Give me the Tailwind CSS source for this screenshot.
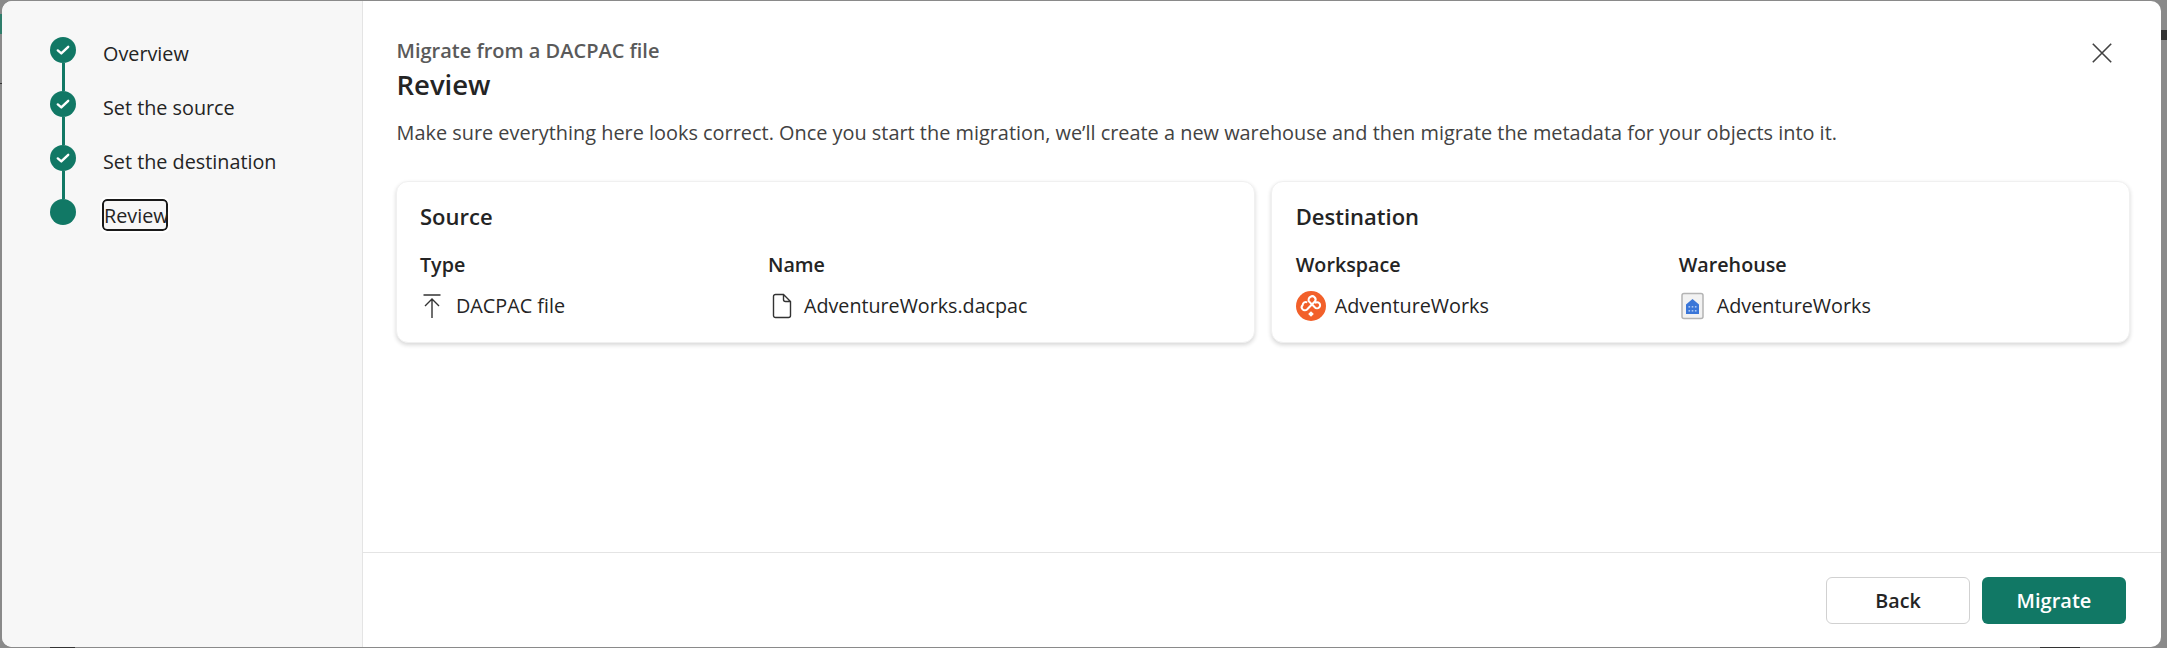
<!doctype html>
<html><head><meta charset="utf-8"><script src="https://cdn.jsdelivr.net/npm/@tailwindcss/browser@4"></script></head>
<body class="m-0 overflow-hidden">
<div class="relative w-[2167px] h-[648px] bg-[#8a8a8a] pt-px pl-[2px] pr-[6px] pb-px font-['Open_Sans','Noto_Sans',sans-serif] text-[#242424]">
  <div class="absolute left-0 top-[14px] w-[2px] h-[20px] bg-[#2f7d6b]"></div>
  <div class="absolute left-0 top-[83px] w-[2px] h-px bg-[#333]"></div>
  <div class="absolute left-[50px] top-[647px] w-[25px] h-px bg-[#333]"></div>
  <div class="absolute left-[2040px] top-[647px] w-[40px] h-px bg-[#333]"></div>
  <div class="absolute left-[2161px] top-[30px] w-[6px] h-[10px] bg-[#333]"></div>
  <div class="relative flex w-full h-full bg-white rounded-[10px] overflow-hidden">
    <aside class="w-[361px] shrink-0 bg-[#f7f7f7] border-r border-[#e4e4e4] pl-[48px] pt-[36px]">
      <ol class="flex flex-col">
        <li class="flex h-[54px]">
          <div class="flex flex-col items-center w-[26px] mr-[27px]">
            <span class="flex items-center justify-center w-[26px] h-[26px] rounded-full bg-[#117865] shrink-0">
              <svg class="w-[14px] h-[14px]" viewBox="0 0 14 14" fill="none"><path d="M1.8 7.4 L5.3 10.4 L12.2 3.8" stroke="#fff" stroke-width="2.4" stroke-linecap="round" stroke-linejoin="round"/></svg>
            </span>
            <span class="w-[3px] grow bg-[#117865]"></span>
          </div>
          <span class="text-[19.8px] leading-[26px] mt-[4px]">Overview</span>
        </li>
        <li class="flex h-[54px]">
          <div class="flex flex-col items-center w-[26px] mr-[27px]">
            <span class="flex items-center justify-center w-[26px] h-[26px] rounded-full bg-[#117865] shrink-0">
              <svg class="w-[14px] h-[14px]" viewBox="0 0 14 14" fill="none"><path d="M1.8 7.4 L5.3 10.4 L12.2 3.8" stroke="#fff" stroke-width="2.4" stroke-linecap="round" stroke-linejoin="round"/></svg>
            </span>
            <span class="w-[3px] grow bg-[#117865]"></span>
          </div>
          <span class="text-[19.8px] leading-[26px] mt-[4px]">Set the source</span>
        </li>
        <li class="flex h-[54px]">
          <div class="flex flex-col items-center w-[26px] mr-[27px]">
            <span class="flex items-center justify-center w-[26px] h-[26px] rounded-full bg-[#117865] shrink-0">
              <svg class="w-[14px] h-[14px]" viewBox="0 0 14 14" fill="none"><path d="M1.8 7.4 L5.3 10.4 L12.2 3.8" stroke="#fff" stroke-width="2.4" stroke-linecap="round" stroke-linejoin="round"/></svg>
            </span>
            <span class="w-[3px] grow bg-[#117865]"></span>
          </div>
          <span class="text-[19.8px] leading-[26px] mt-[4px]">Set the destination</span>
        </li>
        <li class="flex h-[54px]">
          <div class="w-[26px] mr-[26px]"><span class="block w-[26px] h-[26px] rounded-full bg-[#117865]"></span></div>
          <span class="self-start text-[19.8px] leading-[26px] mt-0 h-[32px] w-[66px] pt-[2px] rounded-[5px] border-[2.5px] border-[#1a1a1a] outline-2 outline-white whitespace-nowrap">Review</span>
        </li>
      </ol>
    </aside>
    <main class="relative flex-1 flex flex-col min-w-0">
      <button class="absolute right-[49px] top-[42px] w-[20px] h-[20px]">
        <svg class="w-[20px] h-[20px]" viewBox="0 0 20 20" fill="none"><path d="M0.8 0.8 L19.2 19.2 M19.2 0.8 L0.8 19.2" stroke="#424242" stroke-width="1.6"/></svg>
      </button>
      <div class="flex-1 pl-[33.5px] pr-[31px] pt-[37px]">
        <p class="text-[20px] leading-[26px] font-semibold text-[#5a5a5a]">Migrate from a DACPAC file</p>
        <h1 class="text-[27.5px] leading-[34px] font-semibold mt-[4px]">Review</h1>
        <p class="text-[19.9px] leading-[26px] text-[#424242] mt-[18px] whitespace-nowrap">Make sure everything here looks correct. Once you start the migration, we’ll create a new warehouse and then migrate the metadata for your objects into it.</p>
        <div class="grid grid-cols-2 gap-[16px] mt-[35px] -ml-px">
          <section class="h-[162px] rounded-[12px] bg-white border border-[#f0f0f0] shadow-[0_2px_4px_rgba(0,0,0,0.16)] pl-[23.5px] pt-[19px]">
            <h2 class="text-[22px] leading-[30px] font-semibold">Source</h2>
            <div class="grid grid-cols-[348px_1fr] mt-[21px]">
              <div>
                <h3 class="text-[19.7px] leading-[26px] font-semibold">Type</h3>
                <div class="flex items-center gap-[11px] mt-[15px] h-[26px]">
                  <svg class="w-[26px] h-[26px] -ml-px" viewBox="0 0 26 26" fill="none" stroke="#333" stroke-width="1.4"><path d="M4.5 2 H21.5 M13 25 V6 M6 13 L13 6 L20 13"/></svg>
                  <span class="text-[19.8px] leading-[26px]">DACPAC file</span>
                </div>
              </div>
              <div>
                <h3 class="text-[19.7px] leading-[26px] font-semibold">Name</h3>
                <div class="flex items-center gap-[12px] mt-[15px] h-[26px]">
                  <svg class="w-[20px] h-[26px] ml-[4px]" viewBox="0 0 20 26" fill="none" stroke="#333" stroke-width="1.4"><path d="M3.5 1.5 H11.5 L18.5 8.5 V22.5 A2 2 0 0 1 16.5 24.5 H3.5 A2 2 0 0 1 1.5 22.5 V3.5 A2 2 0 0 1 3.5 1.5 Z M11.5 1.5 V6.5 A2 2 0 0 0 13.5 8.5 H18.5"/></svg>
                  <span class="text-[19.7px] leading-[26px]">AdventureWorks.dacpac</span>
                </div>
              </div>
            </div>
          </section>
          <section class="h-[162px] rounded-[12px] bg-white border border-[#f0f0f0] shadow-[0_2px_4px_rgba(0,0,0,0.16)] pl-[24px] pt-[19px]">
            <h2 class="text-[22px] leading-[30px] font-semibold">Destination</h2>
            <div class="grid grid-cols-[383px_1fr] mt-[21px]">
              <div>
                <h3 class="text-[19.7px] leading-[26px] font-semibold">Workspace</h3>
                <div class="flex items-center gap-[9px] mt-[13px] h-[30px]">
                  <svg class="w-[30px] h-[30px] shrink-0" viewBox="0 0 30 30" fill="none"><circle cx="15" cy="15" r="15" fill="#f2602a"/><g stroke="#fff" stroke-width="2" fill="none"><path d="M11 18.5 L18.8 10.5 A3.2 3.2 0 0 0 14.3 6 A3.2 3.2 0 0 0 13 10.5 L18.8 16.3 A3 3 0 0 0 23.3 12.2 A3 3 0 0 0 18.8 12.2 M11 18.5 A3 3 0 0 1 6.7 14 A3 3 0 0 1 11.2 11.5"/></g><rect x="13" y="21" width="4" height="4" transform="rotate(45 15 23)" fill="#fff"/></svg>
                  <span class="text-[19.8px] leading-[26px]">AdventureWorks</span>
                </div>
              </div>
              <div>
                <h3 class="text-[19.7px] leading-[26px] font-semibold">Warehouse</h3>
                <div class="flex items-center gap-[12px] mt-[13px] h-[30px]">
                  <svg class="w-[24px] h-[30px] shrink-0 ml-[2px]" viewBox="0 0 24 30" fill="none"><rect x="1" y="2.5" width="21" height="25" rx="2" fill="#f2f2f2" stroke="#b4b4b4" stroke-width="1.5"/><path d="M5 23 V13.5 L11.5 8 L18 13.5 V23 Z" fill="#3a76d8"/><g fill="#a9c6f2"><rect x="7.5" y="15" width="1.6" height="1.6"/><rect x="10.7" y="15" width="1.6" height="1.6"/><rect x="13.9" y="15" width="1.6" height="1.6"/><rect x="7.5" y="19" width="1.6" height="1.6"/><rect x="10.7" y="19" width="1.6" height="1.6"/><rect x="13.9" y="19" width="1.6" height="1.6"/></g></svg>
                  <span class="text-[19.8px] leading-[26px]">AdventureWorks</span>
                </div>
              </div>
            </div>
          </section>
        </div>
      </div>
      <footer class="h-[95px] border-t border-[#e4e4e4] flex justify-end items-start gap-[12px] pt-[24px] pr-[35px]">
        <button class="w-[144px] h-[47px] rounded-[6px] bg-white border border-[#d1d1d1] text-[19.7px] font-semibold">Back</button>
        <button class="w-[144px] h-[47px] rounded-[6px] bg-[#117865] text-white text-[20px] font-semibold">Migrate</button>
      </footer>
    </main>
  </div>
</div>
</body></html>
